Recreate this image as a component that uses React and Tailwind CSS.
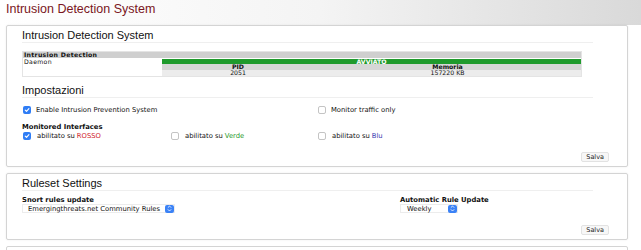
import React from 'react';

const Check = ({ on }) => (
  on ? (
    <span className="w-[8px] h-[8px] rounded-[2px] bg-[#2f7df5] flex items-center justify-center shrink-0">
      <svg width="6" height="6" viewBox="0 0 10 10"><path d="M2 5.2 L4.2 7.3 L8.2 2.6" fill="none" stroke="white" strokeWidth="1.8" strokeLinecap="round" strokeLinejoin="round" /></svg>
    </span>
  ) : (
    <span className="w-[8px] h-[8px] rounded-[2px] bg-white border border-[#c4c4c4] shrink-0"></span>
  )
);

const Stepper = () => (
  <span className="w-[9px] h-[8px] rounded-[2px] bg-[#3b82f6] flex items-center justify-center">
    <svg width="5" height="7" viewBox="0 0 6 8"><path d="M1 3 L3 1 L5 3 M1 5 L3 7 L5 5" fill="none" stroke="white" strokeWidth="1" /></svg>
  </span>
);

const Salva = () => (
  <div className="flex justify-end -mr-[16px]">
    <button className="text-[6.5px] leading-[6px] px-[4px] py-[1px] bg-[#f7f7f7] border border-[#e2e2e2] rounded-[2px] text-[#222]">Salva</button>
  </div>
);

const small = { fontFamily: '"DejaVu Sans", Verdana, sans-serif' };

const App = () => {
  return (
    <div className="w-[641px] h-[250px] overflow-hidden bg-white text-[#111]" style={{ fontFamily: '"Liberation Sans", Arial, sans-serif' }}>
      <div className="h-[25px] bg-gradient-to-r from-white via-[#f4f4f4] to-[#d9d9d9] pl-[6px] pt-[2px]">
        <h1 className="text-[12.5px] leading-[14px] text-[#7a1622]">Intrusion Detection System</h1>
      </div>

      <div className="ml-[6px] w-[622px] flex flex-col gap-[6px]" >
        {/* Card 1 */}
        <div className="h-[142px] border border-[#d4d4d4] rounded-[2px] pl-[15px] pr-[34px] pt-[3px] shadow-[0_0_2px_rgba(0,0,0,0.08)]">
          <h2 className="text-[11px] leading-[13px] border-b border-[#efefef]">Intrusion Detection System</h2>

          <div className="mt-[8px] w-[560px] border border-[#e4e4e4] text-[6.2px] leading-[6px]" style={small}>
            <div className="bg-[#cfcfcf] font-bold pl-[1px] h-[6px] tracking-[0.3px]">Intrusion Detection</div>
            <div className="flex">
              <div className="w-[139px] pl-[1px] pt-[1px] bg-white tracking-[0.3px]">Daemon</div>
              <div className="flex-1 pt-[1px] bg-white">
                <div className="bg-[#1f9a2c] text-white font-bold text-center h-[5px] leading-[5px]">AVVIATO</div>
                <div className="flex bg-[#d6d6d6] font-bold h-[6px] leading-[6px]">
                  <div className="w-[152px] text-center">PID</div>
                  <div className="flex-1 text-center">Memoria</div>
                </div>
                <div className="flex bg-[#ececec] h-[6px] leading-[6px]">
                  <div className="w-[152px] text-center">2051</div>
                  <div className="flex-1 text-center">157220 KB</div>
                </div>
              </div>
            </div>
          </div>

          <h2 className="mt-[7px] text-[11px] leading-[13px] border-b border-[#efefef]">Impostazioni</h2>

          <div style={small}>
            <div className="mt-[8px] flex items-center text-[6.8px] leading-[8px]">
              <div className="w-[296px] flex items-center gap-[5px] pl-[1px]"><Check on /> Enable Intrusion Prevention System</div>
              <div className="flex items-center gap-[5px]"><Check /> Monitor traffic only</div>
            </div>

            <div className="mt-[10px] text-[6.8px] leading-[7px] font-bold">Monitored Interfaces</div>
            <div className="mt-[1px] flex items-center text-[6.8px] leading-[8px]">
              <div className="w-[149px] flex items-center gap-[6px] pl-[1px]"><Check on /> abilitato su <span className="text-[#d0202a] -ml-[4px]">ROSSO</span></div>
              <div className="w-[147px] flex items-center gap-[6px]"><Check /> abilitato su <span className="text-[#1f9a2c] -ml-[4px]">Verde</span></div>
              <div className="flex items-center gap-[6px]"><Check /> abilitato su <span className="text-[#3b3bb0] -ml-[4px]">Blu</span></div>
            </div>

            <div className="mt-[12px]">
              <Salva />
            </div>
          </div>
        </div>

        {/* Card 2 */}
        <div className="h-[67px] border border-[#d4d4d4] rounded-[2px] pl-[15px] pr-[34px] pt-[3px] shadow-[0_0_2px_rgba(0,0,0,0.08)]">
          <h2 className="text-[11px] leading-[13px] border-b border-[#efefef]">Ruleset Settings</h2>
          <div style={small}>
            <div className="mt-[6px] flex text-[6.8px]">
              <div className="w-[378px]">
                <div className="font-bold leading-[7px]">Snort rules update</div>
                <div className="w-[153px] h-[9px] flex items-center justify-between border border-[#ececec] bg-white">
                  <span className="pl-[5px] leading-[8px]">Emergingthreats.net Community Rules</span>
                  <Stepper />
                </div>
              </div>
              <div>
                <div className="font-bold leading-[7px]">Automatic Rule Update</div>
                <div className="w-[58px] h-[9px] flex items-center justify-between border border-[#ececec] bg-white">
                  <span className="pl-[6px] leading-[8px]">Weekly</span>
                  <Stepper />
                </div>
              </div>
            </div>
            <div className="mt-[12px]">
              <Salva />
            </div>
          </div>
        </div>

        {/* Card 3 */}
        <div className="h-[20px] border border-[#d4d4d4] rounded-[2px]"></div>
      </div>
    </div>
  );
};

export default App;
